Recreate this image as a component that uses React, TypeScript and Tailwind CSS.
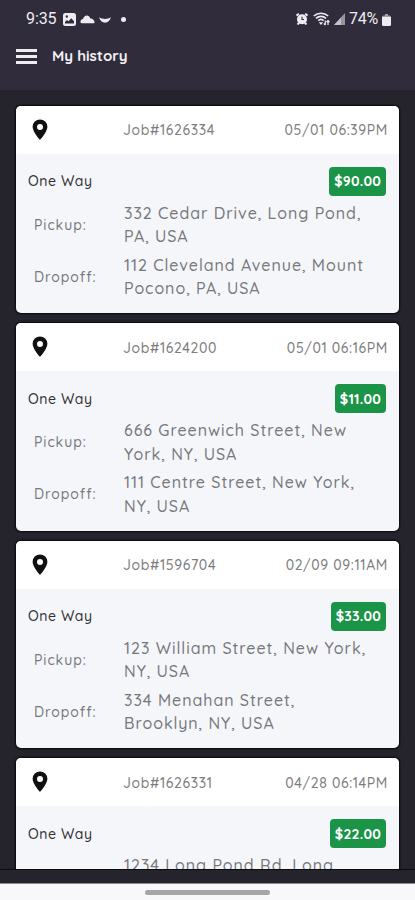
import React from 'react'

interface Job {
  id: string
  date: string
  price: string
  pickup: string
  dropoff: string
}

const JOBS: Job[] = [
  {
    id: '1626334',
    date: '05/01 06:39PM',
    price: '$90.00',
    pickup: '332 Cedar Drive, Long Pond, PA, USA',
    dropoff: '112 Cleveland Avenue, Mount Pocono, PA, USA',
  },
  {
    id: '1624200',
    date: '05/01 06:16PM',
    price: '$11.00',
    pickup: '666 Greenwich Street, New York, NY, USA',
    dropoff: '111 Centre Street, New York, NY, USA',
  },
  {
    id: '1596704',
    date: '02/09 09:11AM',
    price: '$33.00',
    pickup: '123 William Street, New York, NY, USA',
    dropoff: '334 Menahan Street, Brooklyn, NY, USA',
  },
  {
    id: '1626331',
    date: '04/28 06:14PM',
    price: '$22.00',
    pickup: '1234 Long Pond Rd, Long Pond, PA, USA',
    dropoff: '',
  },
]

function StatusBar() {
  return (
    <div className="flex h-[38px] items-center justify-between pl-[26px] pr-[24px] font-['Roboto',sans-serif] text-[#eeecf2]">
      <div className="flex items-center">
        <span className="w-[32px] text-[16px] leading-none tracking-[-0.1px]">9:35</span>
        <svg className="ml-[5px] h-[13px] w-[13px]" viewBox="0 0 13 13" fill="currentColor">
          <path
            fillRule="evenodd"
            d="M2.500 0h8A2.500 2.500 0 0 1 13 2.500v8a2.500 2.500 0 0 1-2.500 2.500h-8A2.500 2.500 0 0 1 0 10.500v-8A2.500 2.500 0 0 1 2.500 0ZM2 10.600h9V8.200L8.300 5.300 5.500 8.300 4 7 2 9ZM3.800 2.300a1.200 1.200 0 1 0 0 2.400 1.200 1.200 0 0 0 0-2.400Z"
          />
        </svg>
        <svg className="ml-[4px] h-[10px] w-[15px]" viewBox="0 0 15 10" fill="currentColor">
          <path d="M1.500 9.300C-.4 8.500.4 5.400 3 5 4 .8 9-.2 10.300 4.500c2.500-.2 4.500 2 4.200 4.300-.1.300-.3.500-.6.500Z" />
        </svg>
        <svg className="ml-[4px] mt-[2px] h-[6px] w-[12px]" viewBox="0 0 12 6" fill="currentColor">
          <path d="M0 .3C3.400 2.600 8.600 2.600 12 .3 10.900 3.800 8.800 5.700 6 5.700S1.100 3.800 0 .3Z" />
        </svg>
        <span className="ml-[10px] h-[5px] w-[5px] rounded-full bg-current" />
      </div>
      <div className="flex items-center">
        <svg className="h-[12px] w-[12px]" viewBox="0 0 12 12" fill="none" stroke="currentColor">
          <circle cx="6" cy="6.300" r="4.300" fill="currentColor" strokeWidth="1.500" />
          <path d="M.5 2.700 2.800.7M11.500 2.700 9.200.7M1.500 11.500l1.700-1.700M10.500 11.500 8.800 9.800" strokeWidth="2" />
          <path d="M6 3.800v2.700h2" stroke="#302c3b" strokeWidth="1.100" />
        </svg>
        <svg className="ml-[5px] h-[14px] w-[17px]" viewBox="0 0 17 14" fill="none" stroke="currentColor">
          <path d="M.8 4C4.800.3 11.200.3 15.200 4M3 6.400c2.900-2.700 7.100-2.700 10 0M5.300 8.700c1.600-1.500 3.800-1.500 5.400 0" strokeWidth="1.700" />
          <path d="M8 13 5.800 10.200h4.400Z" fill="currentColor" stroke="none" />
          <path d="M12.300 13V8.500M10.800 11.500l1.500 1.500M15 8.500V13M13.500 10l1.500-1.500 1.500 1.500" strokeWidth="1.200" />
        </svg>
        <svg className="ml-[4px] h-[12px] w-[11px]" viewBox="0 0 11 12" fill="currentColor">
          <path d="M11 0v12H0Z" opacity=".55" />
          <path d="M7 4.400V12H0Z" opacity=".5" />
        </svg>
        <span className="ml-[4px] w-[32px] whitespace-nowrap text-[16px] leading-none tracking-[-0.3px]">74%</span>
        <svg className="ml-[1px] h-[13px] w-[9px]" viewBox="0 0 9 13" fill="currentColor">
          <path d="M3 1h3v1.500h1.500A1.500 1.500 0 0 1 9 4H0a1.500 1.500 0 0 1 1.500-1.500H3Z" opacity=".6" />
          <path d="M0 4h9v7.500A1.500 1.500 0 0 1 7.500 13h-6A1.500 1.500 0 0 1 0 11.500Z" />
        </svg>
      </div>
    </div>
  )
}

function PinIcon() {
  return (
    <svg className="h-[22px] w-[16px]" viewBox="0 0 16 22" fill="#101010">
      <path
        fillRule="evenodd"
        d="M8 .4A7.400 7.400 0 0 0 .6 7.800C.6 13 8 21 8 21S15.400 13 15.400 7.800A7.400 7.400 0 0 0 8 .4Zm0 4.500a3 3 0 1 1 0 6 3 3 0 0 1 0-6Z"
      />
    </svg>
  )
}

function AddressRow({ label, address }: { label: string; address: string }) {
  return (
    <div className="flex h-[47px] items-center pl-[18px] font-medium text-[#77787c]">
      <span className="w-[90px] shrink-0 pb-[1px] text-[14px] leading-none tracking-[0.95px]">{label}</span>
      <span className="w-[247px] shrink-0 text-[16px] leading-[23.5px] tracking-[0.96px]">{address}</span>
    </div>
  )
}

function JobCard({ job }: { job: Job }) {
  return (
    <div className="h-[207.5px] shrink-0 overflow-hidden rounded-[5px] bg-[#f4f6fa] shadow-[0_0_2px_1px_#08080b]">
      <div className="flex h-[48px] items-center bg-white pl-[16px] pr-[11px] text-[14px] font-medium text-[#7c7c7c]">
        <PinIcon />
        <span className="ml-[75px] pt-[2px] tracking-[0.62px]">Job#{job.id}</span>
        <span className="ml-auto pt-[2px] tracking-[0.62px]">{job.date}</span>
      </div>
      <div className="flex h-[42px] items-end justify-between pl-[12px] pr-[13px]">
        <span className="flex h-[29px] items-center pt-[1px] text-[14px] font-medium tracking-[0.55px] text-[#303135]">
          One Way
        </span>
        <span className="flex h-[29px] items-center rounded-[4px] bg-[#1b9448] px-[5px] pt-[1px] text-[14px] font-bold tracking-[0.2px] text-white">
          {job.price}
        </span>
      </div>
      <div className="mt-[6px] flex flex-col gap-[5px]">
        <AddressRow label="Pickup:" address={job.pickup} />
        {job.dropoff && <AddressRow label="Dropoff:" address={job.dropoff} />}
      </div>
    </div>
  )
}

export default function App() {
  return (
    <div className="flex h-[900px] w-[415px] flex-col overflow-hidden bg-[#25232c] font-['Quicksand','Lato',sans-serif]">
      <header className="h-[90px] shrink-0 bg-[#302c3b]">
        <StatusBar />
        <div className="flex h-[36px] items-center pl-[16px]">
          <div className="flex w-[21px] flex-col gap-[3px]">
            <span className="h-[3px] bg-[#eeecf0]" />
            <span className="h-[3px] bg-[#eeecf0]" />
            <span className="h-[3px] bg-[#eeecf0]" />
          </div>
          <h1 className="ml-[15px] text-[15px] font-bold text-[#f2f0f4]">My history</h1>
        </div>
      </header>

      <main className="flex h-[779px] shrink-0 flex-col gap-[10px] overflow-hidden px-[16px] pt-[15.5px]">
        {JOBS.map((job) => (
          <JobCard key={job.id} job={job} />
        ))}
      </main>
      <div className="h-[14px] shrink-0 border-t border-[#0c0b10]" />

      {/* Gesture bar */}
      <div className="flex h-[17px] shrink-0 justify-center border-t border-[#8b8894] bg-[#f8f8fa] pt-[6px]">
        <span className="h-[5px] w-[125px] rounded-full bg-[#a6a6a6]" />
      </div>
    </div>
  )
}
